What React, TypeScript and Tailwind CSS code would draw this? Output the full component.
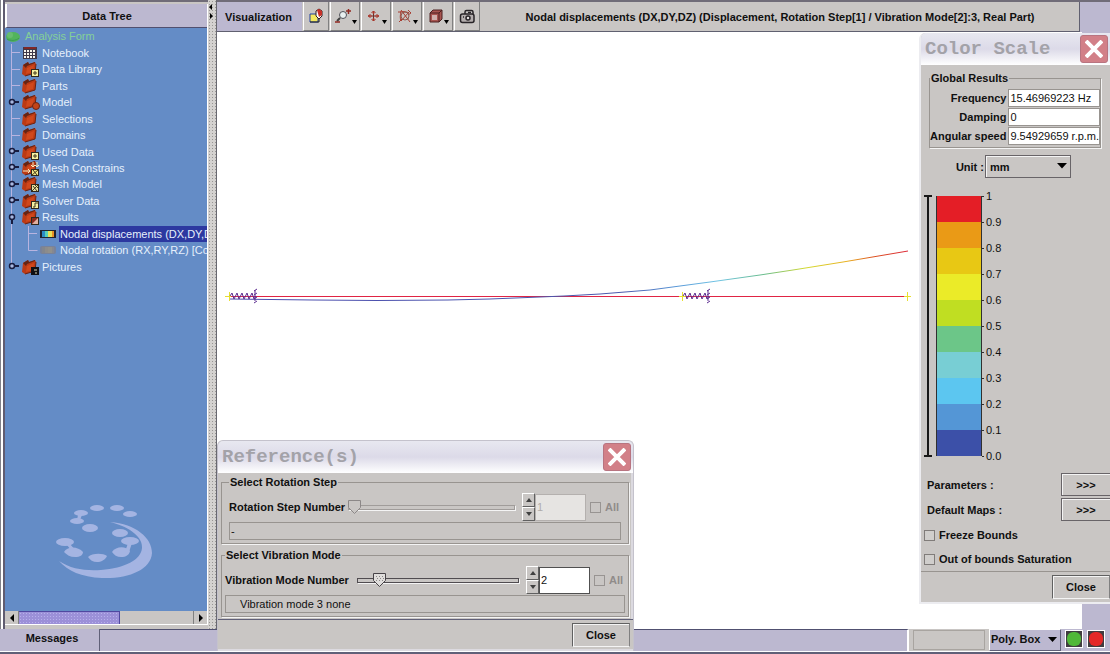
import { useState } from 'react'
import type { ReactNode } from 'react'
import clsx from 'clsx'

type Badge = 'plus' | 'blob' | 'constrain' | 'mesh' | 'solver' | 'result' | 'picture'

type TreeItem = {
  label: string
  icon: 'root' | 'table' | 'folder' | 'ramp' | 'rampGray'
  badge?: Badge
  handle?: 'closed' | 'open'
  depth: number
}

const treeItems: TreeItem[] = [
  { label: 'Analysis Form', icon: 'root', depth: 0 },
  { label: 'Notebook', icon: 'table', depth: 1 },
  { label: 'Data Library', icon: 'folder', badge: 'plus', depth: 1 },
  { label: 'Parts', icon: 'folder', depth: 1 },
  { label: 'Model', icon: 'folder', badge: 'blob', handle: 'closed', depth: 1 },
  { label: 'Selections', icon: 'folder', depth: 1 },
  { label: 'Domains', icon: 'folder', depth: 1 },
  { label: 'Used Data', icon: 'folder', badge: 'plus', handle: 'closed', depth: 1 },
  { label: 'Mesh Constrains', icon: 'folder', badge: 'constrain', handle: 'closed', depth: 1 },
  { label: 'Mesh Model', icon: 'folder', badge: 'mesh', handle: 'closed', depth: 1 },
  { label: 'Solver Data', icon: 'folder', badge: 'solver', handle: 'closed', depth: 1 },
  { label: 'Results', icon: 'folder', badge: 'result', handle: 'open', depth: 1 },
  { label: 'Nodal displacements (DX,DY,DZ)', icon: 'ramp', depth: 2 },
  { label: 'Nodal rotation (RX,RY,RZ) [Coc', icon: 'rampGray', depth: 2 },
  { label: 'Pictures', icon: 'folder', badge: 'picture', handle: 'closed', depth: 1 },
]

const bands = [
  'bg-[#e41e26]',
  'bg-[#ea9a16]',
  'bg-[#e8c814]',
  'bg-[#ebeb28]',
  'bg-[#c0de22]',
  'bg-[#6cc688]',
  'bg-[#78ced4]',
  'bg-[#5cc6f0]',
  'bg-[#5496d6]',
  'bg-[#3c50a8]',
]

const ticks = ['1', '0.9', '0.8', '0.7', '0.6', '0.5', '0.4', '0.3', '0.2', '0.1', '0.0']

function FolderIcon({ badge }: { badge?: Badge }) {
  return (
    <svg width="20" height="16" viewBox="0 0 20 16" className="shrink-0">
      <path d="M1 4 6 1 7 3 13 1 14 3 13 12 3 15 0 13Z" fill="#bc3a14" />
      <path d="M1 4 6 1 7 3 13 1 13 2 5 5 4 7Z" fill="#642414" />
      <path d="M5 7 12 4 11 11 4 13Z" fill="#d0481c" />
      <path d="M3 15 13 12 14 3" fill="none" stroke="#6e2210" />
      {badge === 'blob' && <circle cx="14" cy="12" r="3.5" fill="#c24418" stroke="#6a2414" />}
      {badge === 'plus' && (
        <g>
          <rect x="9.5" y="8.5" width="7" height="7" fill="#f4f0a0" stroke="#30281c" />
          <path d="M13 10v4M11 12h4" stroke="#44381c" />
        </g>
      )}
      {badge === 'constrain' && (
        <g>
          <path d="M11 2v5M15 2v5M9 5l2 2 2-2 2 2 2-2M1 11h7M6 9l2 2-2 2" fill="none" stroke="#f4ecc0" />
          <rect x="9.5" y="9.500" width="7" height="6" fill="#f0e888" stroke="#30281c" />
          <path d="m10 15 6-5M11 10l4 5" stroke="#44381c" />
        </g>
      )}
      {badge === 'mesh' && (
        <g>
          <rect x="9.5" y="8.5" width="7" height="7" fill="#e8e0a0" stroke="#30281c" />
          <path d="m10 15 6-6M11 10l4 5M13 9l3 3" stroke="#44381c" />
        </g>
      )}
      {badge === 'solver' && (
        <g>
          <rect x="9.5" y="8.5" width="7" height="7" fill="#f4f0a0" stroke="#30281c" />
          <path d="M11 14h2v-4h3" fill="none" stroke="#44381c" />
        </g>
      )}
      {badge === 'result' && (
        <g>
          <rect x="9.5" y="8.5" width="7" height="7" fill="#8c2c20" stroke="#30281c" />
          <path d="m10 15 6-6v6Z" fill="#e0b0a0" />
        </g>
      )}
      {badge === 'picture' && (
        <g>
          <rect x="9" y="8" width="8" height="8" fill="#101014" />
          <path d="M12 11h3M13 14h2" stroke="#d8d4b0" />
        </g>
      )}
    </svg>
  )
}

function TreeIcon({ item }: { item: TreeItem }) {
  if (item.icon === 'root') {
    return (
      <svg width="16" height="14" viewBox="0 0 16 14" className="shrink-0">
        <ellipse cx="8" cy="8" rx="7" ry="5" fill="#52b45c" />
        <circle cx="5" cy="6" r="3" fill="#68bc70" />
        <path d="M2 10c3 2 9 2 12-1" fill="none" stroke="#3c9a54" />
      </svg>
    )
  }
  if (item.icon === 'table') {
    return (
      <svg width="20" height="14" viewBox="0 0 20 14" className="shrink-0">
        <rect x="1" y="1" width="14" height="12" fill="#403848" />
        <rect x="2" y="1" width="12" height="2" fill="#802828" />
        <path d="M2 5h12M2 8h12M2 11h12" stroke="#f8f4ec" strokeWidth="2" strokeDasharray="2 1" />
      </svg>
    )
  }
  if (item.icon === 'folder') return <FolderIcon badge={item.badge} />

  const gray = item.icon === 'rampGray'
  return (
    <svg width="19" height="10" viewBox="0 0 19 10" className="shrink-0">
      <rect x="0" y="1" width="16" height="8" rx={gray ? 2 : 0} fill={gray ? '#78829a' : '#202430'} />
      <rect x="2" y="2" width="4" height="6" fill={gray ? '#82868e' : '#2c8cc8'} />
      <rect x="5" y="2" width="3" height="6" fill={gray ? '#8c8c8c' : '#58d0b8'} />
      <rect x="8" y="2" width="4" height="6" fill={gray ? '#90908c' : '#e8e058'} />
      <rect x="12" y="2" width="2" height="6" fill={gray ? '#868890' : '#e89028'} />
    </svg>
  )
}

// Guide lines and expand knob in front of each row
function Branch({ item, last }: { item: TreeItem; last: boolean }) {
  if (item.depth === 0) return null
  return (
    <svg
      width={item.depth === 2 ? 35 : 17}
      height="17"
      viewBox={item.depth === 2 ? '0 0 35 17' : '0 0 17 17'}
      className="shrink-0"
      fill="none"
      stroke="#b8b4e0"
    >
      <path d={last ? 'M6.5 0v8' : 'M6.5 0v17'} />
      {item.depth === 1 && !item.handle && <path d="M6 8.5h9" />}
      {item.depth === 2 && <path d={item.icon === 'rampGray' ? 'M23.5 0v8.5h9' : 'M23.5 0v17M23 8.5h9'} />}
      {item.handle && (
        <g stroke="#181c40">
          <circle cx="7" cy="8" r="2.5" fill="#a8b8e0" strokeWidth="1.5" />
          {item.handle === 'closed' ? <path d="M10 8h4" strokeWidth="2" /> : <path d="M7 11v4" strokeWidth="2" />}
        </g>
      )}
    </svg>
  )
}

function DataTree() {
  const [selected, setSelected] = useState(12)

  return (
    <aside className="flex w-[203px] flex-1 flex-col border-r border-white">
      <h2 className="flex h-6 shrink-0 items-center justify-center border-b border-l-2 border-b-[#505070] border-l-white bg-[#bcb8d0] font-bold">
        Data Tree
      </h2>
      <div className="flex flex-1 flex-col justify-between overflow-hidden bg-[#648cc6]">
        <ul className="flex h-[247px] flex-col">
          {treeItems.map((item, i) => (
            <li key={item.label} className="flex flex-1 items-center overflow-hidden">
              <Branch item={item} last={i === treeItems.length - 1} />
              <TreeIcon item={item} />
              <button
                onClick={() => setSelected(i)}
                className={clsx(
                  'h-full whitespace-nowrap pr-1 text-left',
                  item.depth === 0 ? 'pl-1 text-[#84d098]' : item.depth === 2 ? 'pl-px' : '',
                  item.depth > 0 && 'text-[#e6f0fc]',
                  i === selected && 'bg-[#2c38a0]'
                )}
              >
                {item.label}
              </button>
            </li>
          ))}
        </ul>
        <svg width="100" height="76" viewBox="0 0 100 76" className="mb-8 ml-[51px]" fill="#a4b4e2">
          <ellipse cx="41" cy="5" rx="7" ry="3" />
          <ellipse cx="61" cy="5" rx="7" ry="3" />
          <ellipse cx="74" cy="11" rx="7" ry="3" />
          <ellipse cx="25" cy="10" rx="7" ry="3" />
          <ellipse cx="21" cy="18" rx="7" ry="3" />
          <ellipse cx="34" cy="25" rx="8" ry="4" />
          <ellipse cx="64" cy="30" rx="8" ry="4" />
          <ellipse cx="9" cy="39" rx="9" ry="4" />
          <ellipse cx="74" cy="38" rx="9" ry="4" />
          <path d="M8 49c3-6 14-6 19 0 0 3-3 5-8 5s-8-2-11-5Z" />
          <path d="M32 54c4-4 15-4 19-1-2 4-6 6-10 6s-7-2-9-5Z" />
          <path d="M56 49c4-6 14-6 18-1-1 4-4 6-9 6-4 0-7-2-9-5Z" />
          <path d="m22 12 4 0-2 5h-3ZM10 41h4l6 7h-4ZM72 40h4l-3 9h-4Z" />
          <path d="M54 19c26 2 42 16 42 31-1 17-24 26-50 25-21-1-34-7-43-17 12 8 26 10 42 9 24-2 40-10 41-22 1-10-11-21-32-26Z" />
        </svg>
      </div>
      <div className="flex h-[14px] shrink-0 border-b border-white bg-[#c9c6c4]">
        <button aria-label="Scroll left" className="flex w-[14px] items-center justify-center border-r border-[#808080]">
          <svg width="4" height="8" viewBox="0 0 4 8"><path d="M4 0v8L0 4Z" /></svg>
        </button>
        <div className="flex-1">
          <div className="h-full w-[58%] border-r border-t border-[#5048a0] bg-[#9c90d8] bg-[radial-gradient(#b8b0ec_1px,transparent_1px)] bg-size-[3px_3px]" />
        </div>
        <button aria-label="Scroll right" className="flex w-[14px] items-center justify-center border-l border-[#808080]">
          <svg width="4" height="8" viewBox="0 0 4 8"><path d="M0 0v8l4-4Z" /></svg>
        </button>
      </div>
    </aside>
  )
}

function ToolButton({ label, menu, wide, children }: { label: string; menu?: boolean; wide?: boolean; children: ReactNode }) {
  return (
    <button
      aria-label={label}
      className={clsx(
        'flex items-center justify-center border-b border-l border-r border-b-[#808080] border-l-white border-r-[#808080] bg-[#c9c6c4]',
        wide ? 'w-[30px]' : 'w-[26px]'
      )}
    >
      {children}
      {menu && (
        <svg width="5" height="4" viewBox="0 0 5 4" className="mt-3 shrink-0"><path d="M0 0h5L2.500 4Z" /></svg>
      )}
    </button>
  )
}

function Toolbar() {
  return (
    <header className="mr-[30px] flex h-[30px] shrink-0 gap-px border-b border-r border-[#606070] bg-[#c9c6c4] font-bold">
      <h2 className="flex w-[85px] items-center bg-[#bcb8d0] pl-2">Visualization</h2>
      <ToolButton label="Paint">
        <svg width="16" height="16" viewBox="0 0 16 16">
          <path d="M2 6h8v8H2Z" fill="#f4e860" stroke="#2040a0" />
          <path d="M2 14h9V9" fill="none" stroke="#202020" />
          <path d="M8 3 11 1l3 2v5l-3 3-3-3Z" fill="#fff" stroke="#302020" />
          <path d="m9 2 2-1 3 2v4l-3 2Z" fill="#c83028" />
        </svg>
      </ToolButton>
      <ToolButton label="Zoom" menu wide>
        <svg width="18" height="18" viewBox="0 0 18 18" fill="none">
          <circle cx="9" cy="8" r="3.500" fill="#e8f0f0" stroke="#505058" />
          <path d="m6 11-3 3" stroke="#404040" strokeWidth="2" />
          <path d="M12 4h5M14.500 2v5M1 15h5" stroke="#902820" strokeWidth="1.500" />
        </svg>
      </ToolButton>
      <ToolButton label="Pan" menu wide>
        <svg width="16" height="16" viewBox="0 0 16 16" fill="none" stroke="#a83428">
          <path d="M7.500 3v3M7.500 10v3M2 8h4M9 8h4" strokeWidth="1.500" />
          <path d="m5.500 5 2-2 2 2M5.500 11l2 2 2-2M4.500 6l-2 2 2 2M10.500 6l2 2-2 2" />
          <path d="M7.500 6v4M6 8h3" stroke="#6c2c28" />
        </svg>
      </ToolButton>
      <ToolButton label="Rotate" menu wide>
        <svg width="17" height="17" viewBox="0 0 17 17" fill="none" stroke="#a83c30">
          <path d="M2 4h3M5 2l9 12M4 4c4-1 7 0 9 1M5 4c-1 4-1 6 0 9M5 13l8-9M12 2l3 3-3 2M3 14l3-3" />
          <circle cx="9" cy="8" r="4" stroke="#905850" />
        </svg>
      </ToolButton>
      <ToolButton label="Shading" menu wide>
        <svg width="16" height="16" viewBox="0 0 16 16">
          <path d="M2 5 5 2h9v9l-3 3H2Z" fill="#a85450" stroke="#4c2020" />
          <path d="M2 5h9v9M11 5l3-3" fill="none" stroke="#4c2020" />
          <rect x="4" y="7" width="5" height="5" fill="#d0b0ac" />
        </svg>
      </ToolButton>
      <ToolButton label="Snapshot">
        <svg width="17" height="15" viewBox="0 0 17 15" fill="none" stroke="#282428" strokeWidth="1.500">
          <rect x="1.500" y="5" width="13.500" height="8.500" rx="2" fill="#b4aeae" />
          <path d="M6 5V3q0-1.500 1.500-1.500h5Q14 1.500 14 3v2" />
          <circle cx="9" cy="9" r="2" fill="#e4e0e0" />
          <path d="M4 8h1M9 3.500h3" />
        </svg>
      </ToolButton>
      <p className="flex flex-1 items-center justify-center whitespace-nowrap">
        Nodal displacements (DX,DY,DZ) (Displacement, Rotation Step[1] / Vibration Mode[2]:3, Real Part)
      </p>
    </header>
  )
}

const spring = 'm0 0 2-3 2 6 3-6 2 6 3-6 2 6 3-6 2 6 3-6 2 6 2-3'

function Plot() {
  return (
    <svg width="865" height="400" viewBox="0 0 865 400" fill="none" className="block">
      <defs>
        <linearGradient id="mode" gradientUnits="userSpaceOnUse" x1="12" y1="0" x2="691" y2="0">
          <stop offset="0" stopColor="#4c4cae" />
          <stop offset="0.58" stopColor="#4a58ac" />
          <stop offset="0.66" stopColor="#5898d8" />
          <stop offset="0.72" stopColor="#70c4e4" />
          <stop offset="0.79" stopColor="#68bc88" />
          <stop offset="0.85" stopColor="#d4da30" />
          <stop offset="0.91" stopColor="#e8b020" />
          <stop offset="0.95" stopColor="#dc5020" />
          <stop offset="1" stopColor="#dc2838" />
        </linearGradient>
      </defs>
      <polyline points="12,264.500 691,264.500" stroke="#e02444" />
      <polyline
        points="12,267 96,268 160,268.500 231,268 273,267 298,266 323,265 347,264 383,262 433,258 493,250 543,243 576,238 626,230 691,219"
        stroke="url(#mode)"
      />
      <path d="M12.500 260v9M8 264.500h6M465.500 260v9M462 264.500h7M690.500 260v9M687 264.500h7" stroke="#e8e030" />
      <g stroke="#5c2c90">
        <path d={spring} transform="translate(13 264)" />
        <path d={spring} transform="translate(466 264)" />
        <path d="m37 259 3-2M37 263l3-2M37 267l3-2M37 271l3-2M38 258v11" />
        <path d="m490 259 3-2M490 263l3-2M490 267l3-2M490 271l3-2M491 258v11" />
      </g>
    </svg>
  )
}

function TitleBar({ title }: { title: string }) {
  return (
    <div className="flex h-8 shrink-0 items-center justify-between bg-linear-to-b from-[#e8e8f0] via-[#dcdae8] to-white pl-1 pr-[2px]">
      <h2 className="whitespace-nowrap font-['Liberation_Mono',monospace] text-[19px] font-bold leading-6 text-[#a3a2a8]">{title}</h2>
      <button
        aria-label={`Close ${title}`}
        className="flex size-7 items-center justify-center rounded-[3px] border border-[#b87480] bg-[#d28088]"
      >
        <svg width="18" height="18" viewBox="0 0 18 18" stroke="#fff" strokeWidth="4">
          <path d="m1 1 16 16M17 1 1 17" />
        </svg>
      </button>
    </div>
  )
}

function Group({ title, className, children }: { title: string; className?: string; children: ReactNode }) {
  return (
    <fieldset className={clsx('min-w-0 border border-[#989490] shadow-[1px_1px_0_#f4f4f4]', className)}>
      <legend className="h-[14px] px-px font-bold leading-[14px]">{title}</legend>
      {children}
    </fieldset>
  )
}

type NumberRowProps = {
  id: string
  label: string
  value: number
  max: number
  disabled?: boolean
  onChange: (value: number) => void
}

function NumberRow({ id, label, value, max, disabled, onChange }: NumberRowProps) {
  const percent = ((value - 1) / (max - 1)) * 100

  return (
    <div className="flex h-7 items-center">
      <label htmlFor={id} className="whitespace-nowrap font-bold">{label}</label>
      <div className={clsx('relative mr-[7px] flex h-4 flex-1 items-center', disabled ? 'ml-[3px]' : 'ml-2')}>
        <input
          type="range"
          aria-label={`${label} slider`}
          min={1}
          max={max}
          value={value}
          disabled={disabled}
          onChange={(e) => onChange(Number(e.target.value))}
          className={clsx(
            'h-[5px] w-full appearance-none border bg-[#c9c6c4] shadow-[1px_1px_0_#f4f4f4] [&::-webkit-slider-thumb]:opacity-0',
            disabled ? 'border-[#a09c9a]' : 'border-[#504c50]'
          )}
        />
        <div className="pointer-events-none absolute inset-y-0 left-0 right-[14px]">
          <svg width="14" height="16" viewBox="0 0 14 16" className="absolute top-0" style={{ left: `${percent}%` }}>
            <path d="M.5 1.500h12v7l-6 6-6-6Z" fill={disabled ? '#c9c6c4' : '#e0dedc'} stroke={disabled ? '#8c8888' : '#484448'} />
            {!disabled && <path d="M3 4.500h8M4 6.500h8M3 8.500h8" stroke="#8c8888" strokeDasharray="1 2" />}
          </svg>
        </div>
      </div>
      <div className="flex h-7 w-[13px] flex-col">
        <button aria-label={`Increase ${label}`} disabled={disabled} onClick={() => onChange(Math.min(max, value + 1))} className="flex flex-1 items-center justify-center border border-b-[#606060] border-l-white border-r-[#606060] border-t-white">
          <svg width="6" height="4" viewBox="0 0 6 4" fill="#404040"><path d="M0 4h6L3 0Z" /></svg>
        </button>
        <button aria-label={`Decrease ${label}`} disabled={disabled} onClick={() => onChange(Math.max(1, value - 1))} className="flex flex-1 items-center justify-center border border-b-[#606060] border-l-white border-r-[#606060] border-t-white">
          <svg width="6" height="4" viewBox="0 0 6 4" fill="#404040"><path d="M0 0h6L3 4Z" /></svg>
        </button>
      </div>
      <input
        id={id}
        value={value}
        disabled={disabled}
        onChange={(e) => onChange(Number(e.target.value) || 1)}
        className={clsx(
          'h-[27px] w-[51px] border px-px',
          disabled ? 'border-[#b4b0ae] bg-[#e6e4e2] text-[#b0acaa]' : 'border-[#505050] bg-white'
        )}
      />
      <label className="ml-1 flex w-[31px] items-center gap-1 font-bold text-[#908c8a]">
        <input type="checkbox" disabled className="size-[11px] appearance-none border border-[#989492]" />
        All
      </label>
    </div>
  )
}

function ReferenceDialog() {
  const [mode, setMode] = useState(2)

  return (
    <section className="absolute bottom-px left-[217px] flex w-[417px] flex-col overflow-hidden rounded-t-md border-x border-t border-[#c4c2cc] bg-[#c9c6c4]">
      <TitleBar title="Reference(s)" />
      <div className="flex flex-col gap-1 border-r-2 border-[#dcdae0] py-[2px] pl-[3px] pr-[2px]">
        <Group title="Select Rotation Step" className="px-[7px] pb-[3px]">
          <div className="pt-1">
            <NumberRow id="rotation-step" label="Rotation Step Number" value={1} max={10} disabled onChange={() => {}} />
          </div>
          <output className="mt-px flex h-[18px] items-center border border-[#989490] pl-px">-</output>
        </Group>
        <Group title="Select Vibration Mode" className="px-[3px] pb-[3px]">
          <div className="pt-1">
            <NumberRow id="vibration-mode" label="Vibration Mode Number" value={mode} max={10} onChange={setMode} />
          </div>
          <output className="mt-px flex h-[18px] items-center border border-[#989490] pl-[14px]">Vibration mode {mode + 1} none</output>
        </Group>
      </div>
      <footer className="flex h-8 items-center justify-end border-b-2 border-t border-b-[#dcdae0] border-t-[#606078] pr-[3px]">
        <CloseButton />
      </footer>
    </section>
  )
}

function CloseButton() {
  return (
    <button className="h-6 w-[58px] border border-b-[#f4f4f4] border-l-[#606060] border-r-[#808080] border-t-[#606060] bg-[#c9c6c4] font-bold shadow-[inset_1px_1px_0_#f4f4f4]">
      Close
    </button>
  )
}

const results = [
  { id: 'frequency', label: 'Frequency', value: '15.46969223 Hz' },
  { id: 'damping', label: 'Damping', value: '0' },
  { id: 'angular-speed', label: 'Angular speed', value: '9.54929659 r.p.m.' },
]

function ColorScaleDialog() {
  return (
    <section className="absolute right-0 top-[33px] flex w-[191px] flex-col overflow-hidden rounded-tl-md border-b-2 border-l-2 border-[#ececf0] bg-[#c9c6c4]">
      <TitleBar title="Color Scale" />
      <div className="pl-2 pr-[9px] pt-[6px]">
        <Group title="Global Results" className="pb-[2px] pr-px">
          <div className="grid grid-cols-[1fr_92px] gap-px pt-1">
            {results.map((row) => (
              <div key={row.id} className="contents">
                <label htmlFor={row.id} className="self-center whitespace-nowrap pr-px text-right font-bold">{row.label}</label>
                <input id={row.id} readOnly defaultValue={row.value} className="h-[18px] min-w-0 border border-[#989490] bg-white pl-px" />
              </div>
            ))}
          </div>
        </Group>
      </div>
      <div className="mt-[7px] flex h-[23px] items-center justify-end gap-px pr-[39px] font-bold">
        <label htmlFor="unit">Unit :</label>
        <div className="relative">
          <select id="unit" className="h-[23px] w-[86px] appearance-none border border-[#686468] pl-1 font-bold shadow-[inset_1px_1px_0_#f4f4f4]">
            <option>mm</option>
            <option>m</option>
          </select>
          <svg width="10" height="6" viewBox="0 0 10 6" className="pointer-events-none absolute right-1 top-2"><path d="M0 0h10L5 5.500Z" /></svg>
        </div>
      </div>
      <div className="mt-[5px] flex pl-[3px]">
        <svg width="8" height="262" viewBox="0 0 8 262" className="my-3" stroke="#181818" fill="none">
          <path d="M4 1v260" strokeWidth="2" />
          <path d="M0 1h8M0 261h8" strokeWidth="2" />
        </svg>
        <div className="my-[13px] ml-1 flex w-[46px] flex-col border-x border-[#303030]">
          {bands.map((band) => (
            <div key={band} className={clsx('h-[26px]', band)} />
          ))}
        </div>
        <ol>
          {ticks.map((tick) => (
            <li key={tick} className="flex h-[26px] items-center gap-[2px] before:h-px before:w-[2px] before:bg-[#303030]">{tick}</li>
          ))}
        </ol>
      </div>
      <div className="mt-1 flex flex-col gap-[2px] pl-[6px] font-bold">
        {['Parameters :', 'Default Maps :'].map((label) => (
          <div key={label} className="flex items-center justify-between">
            <span>{label}</span>
            <button aria-label={label} className="h-[23px] w-[49px] border-b border-l border-t border-[#686468] shadow-[inset_1px_1px_0_#f4f4f4]">
              &gt;&gt;&gt;
            </button>
          </div>
        ))}
      </div>
      <div className="flex flex-col pl-[3px] pt-[2px] font-bold">
        {['Freeze Bounds', 'Out of bounds Saturation'].map((label) => (
          <label key={label} className="flex h-6 items-center gap-1">
            <input type="checkbox" className="size-[11px] appearance-none border border-[#807c7a] bg-[#d0cecc] checked:bg-[#505050]" />
            {label}
          </label>
        ))}
      </div>
      <footer className="flex h-[31px] items-center justify-end border-t border-[#989490]">
        <CloseButton />
      </footer>
    </section>
  )
}

function StatusBar() {
  return (
    <footer className="flex h-[23px] shrink-0 items-stretch border-b border-white bg-[#bcb8d0] pl-[5px]">
      <button className="w-[95px] border-r border-[#606078] pb-1 font-bold">Messages</button>
      <div className="flex-1 border-r-2 border-t border-r-white border-t-[#505070]" />
      <div className="flex bg-[#c9c6c4] pl-1">
        <div className="my-[1px] w-[72px] border border-[#a8a4a0]" />
        <div className="relative ml-1 bg-[#bcb8d0]">
          <select aria-label="Selection mode" className="h-full w-[72px] appearance-none border border-white border-b-[#606078] border-r-[#606078] pb-[3px] pl-px font-bold">
            <option>Poly. Box</option>
            <option>Poly. Ray</option>
          </select>
          <svg width="9" height="5" viewBox="0 0 9 5" className="pointer-events-none absolute right-1 top-2"><path d="M0 0h9L4.500 5Z" /></svg>
        </div>
      </div>
      <div className="flex items-center gap-1 pb-[2px] pl-1 pr-[5px]">
        <button aria-label="Run" className="flex size-[18px] items-center justify-center border border-white bg-[#403c40]">
          <span className="size-[14px] rounded-[6px] bg-[#50b838]" />
        </button>
        <button aria-label="Stop" className="flex size-[18px] items-center justify-center border border-white bg-[#403c40]">
          <span className="size-[14px] rounded-[6px] bg-[#e42828]" />
        </button>
      </div>
    </footer>
  )
}

export default function App() {
  return (
    <div className="relative flex h-screen flex-col overflow-hidden border-b-2 border-[#606078] bg-[#c9c6c4] font-['Liberation_Sans',Arial,sans-serif] text-[11px] leading-[14px] text-[#101010]">
      <div className="flex min-h-0 flex-1">
        <div className="w-[5px] shrink-0 border-l border-r-2 border-l-[#808088] border-r-[#605c70] bg-white" />
        <div className="flex flex-col border-t-2 border-[#706c78] pb-1 pt-[2px]">
          <DataTree />
        </div>
        <div className="w-[9px] shrink-0 border-r border-[#686870] bg-[#d4d2d0] bg-[radial-gradient(#989694_1px,transparent_1px)] bg-size-[3px_3px] pt-1">
          <svg width="6" height="16" viewBox="0 0 6 16"><path d="M4 0v6L1 3ZM2 9v6l3-3Z" /></svg>
        </div>
        <main className="flex min-w-0 flex-1 flex-col border-t-2 border-[#706c78] bg-[#bcb8d0]">
          <Toolbar />
          <div className="mr-7 flex-1 overflow-hidden bg-white">
            <Plot />
          </div>
        </main>
      </div>
      <StatusBar />
      <ReferenceDialog />
      <ColorScaleDialog />
    </div>
  )
}
